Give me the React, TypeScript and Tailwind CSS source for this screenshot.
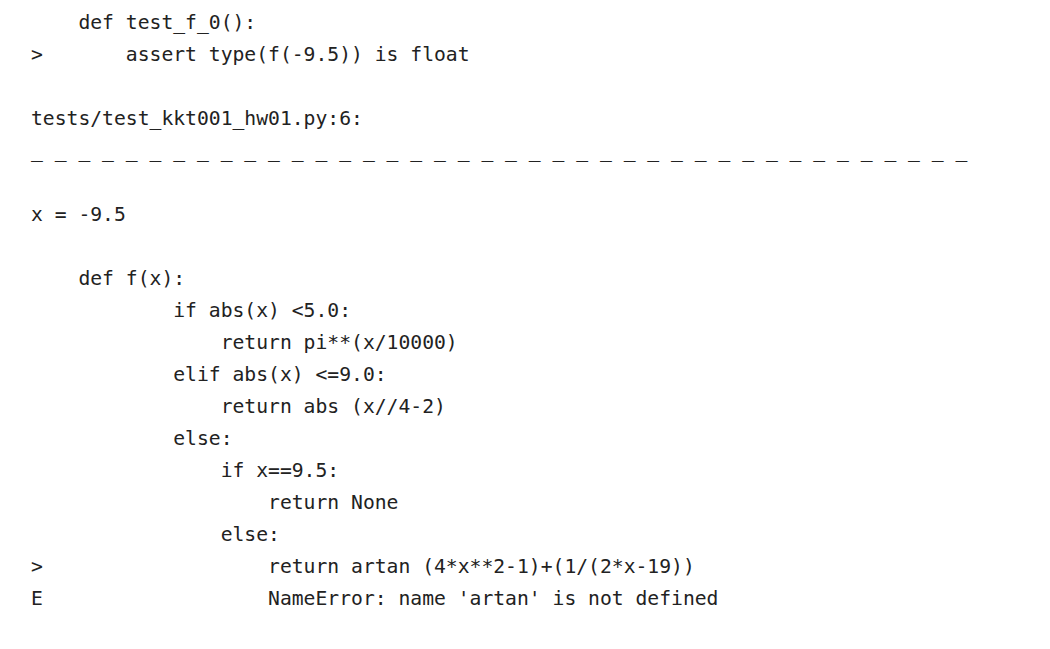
import React from 'react';

const lines = [
  '    def test_f_0():',
  '>       assert type(f(-9.5)) is float',
  '',
  'tests/test_kkt001_hw01.py:6:',
  Array(40).fill('_').join(' '),
  '',
  'x = -9.5',
  '',
  '    def f(x):',
  '            if abs(x) <5.0:',
  '                return pi**(x/10000)',
  '            elif abs(x) <=9.0:',
  '                return abs (x//4-2)',
  '            else:',
  '                if x==9.5:',
  '                    return None',
  '                else:',
  '>                   return artan (4*x**2-1)+(1/(2*x-19))',
  "E                   NameError: name 'artan' is not defined",
];

export default function App() {
  return (
    <div className="w-[1050px] h-[649px] bg-white overflow-hidden">
      <pre
        className="pl-[31px] pt-[7px] text-[19.7px] leading-[32px] text-[#222222] whitespace-pre"
        style={{ fontFamily: '"DejaVu Sans Mono", "Liberation Mono", monospace' }}
      >
        {lines.map((line, i) => (
          <div key={i} className="h-[32px]">
            {line}
          </div>
        ))}
      </pre>
    </div>
  );
}
